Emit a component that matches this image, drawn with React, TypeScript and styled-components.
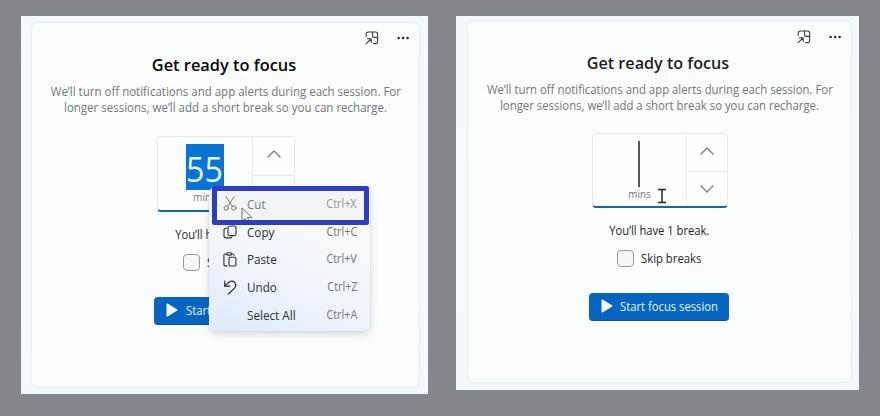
import React from "react";
import styled, { createGlobalStyle } from "styled-components";

const GlobalStyle = createGlobalStyle`
  *, *::before, *::after { box-sizing: border-box; }
  body { margin: 0; background: #85868b; overflow: hidden; }
  svg { display: block; flex: none; }
`;

const Page = styled.main`
  display: flex;
  align-items: flex-start;
  gap: 28px;
  width: 880px;
  height: 416px;
  padding: 16px 21px;
  background: #85868b;
  font-family: "Open Sans", "Noto Sans", sans-serif;
  color: #252627;
`;

const Panel = styled.section<{ $compact?: boolean }>`
  position: relative;
  display: flex;
  flex: none;
  width: ${(p) => (p.$compact ? 403 : 407)}px;
  height: ${(p) => (p.$compact ? 374 : 378)}px;
  padding: ${(p) => (p.$compact ? "4px 7px 7px 11px" : "6px 8px 6px 10px")};
  background: linear-gradient(180deg, #f2fafb, #f3fcfb 60%, #f2f9fb);
`;

const Card = styled.div`
  display: flex;
  flex: 1;
  min-width: 0;
  flex-direction: column;
  align-items: center;
  border: 1px solid #e9eeef;
  border-radius: 7px;
  background: #fcfefd;
  box-shadow: 0 0 1px #e6ebec;
`;

const Toolbar = styled.div<{ $compact?: boolean }>`
  display: flex;
  align-self: stretch;
  align-items: center;
  justify-content: flex-end;
  gap: 18px;
  height: 30px;
  padding: ${(p) => (p.$compact ? "2px 9px 0 0" : "0 9px 0 0")};
`;

const Fit = styled.span<{ $x: number; $from?: string }>`
  display: inline-block;
  white-space: nowrap;
  transform: scaleX(${(p) => p.$x});
  transform-origin: ${(p) => p.$from ?? "center"};
`;

const Title = styled.h1<{ $compact?: boolean }>`
  margin: 0;
  padding-right: 3px;
  font-size: 17px;
  font-weight: 600;
  line-height: 23px;
  color: ${(p) => (p.$compact ? "#1d1e1f" : "#050506")};
`;

const Description = styled.p`
  display: flex;
  flex-direction: column;
  align-items: center;
  margin: 7px 0 0;
  font-size: 13px;
  line-height: 16px;
  color: #737576;
`;

const NumberBox = styled.div<{ $compact?: boolean }>`
  display: flex;
  flex: none;
  width: ${(p) => (p.$compact ? 136 : 138)}px;
  height: ${(p) => (p.$compact ? 75 : 76)}px;
  margin-top: ${(p) => (p.$compact ? 20 : 21)}px;
  border: 1px solid #e8eaea;
  border-bottom: 2px solid #0f66b5;
  border-radius: 4px;
  background: #fdfefe;
`;

const Value = styled.div`
  display: flex;
  flex: 1;
  flex-direction: column;
  align-items: center;
  padding-top: 7px;
`;

const Selected = styled.div`
  display: flex;
  justify-content: center;
  width: 38px;
  height: 46px;
  background: #0a74d6;
  color: #eaf8fc;
  font-size: 34px;
  line-height: 50px;
`;

const Caret = styled.div`
  width: 2px;
  height: 46px;
  background: #565757;
`;

const Unit = styled.div`
  height: 14px;
  font-size: 11px;
  line-height: 14px;
  color: #757677;
`;

const Stepper = styled.div<{ $compact?: boolean }>`
  display: flex;
  flex-direction: column;
  width: ${(p) => (p.$compact ? 41 : 42)}px;
  border-left: 1px solid #e8eaea;
`;

const Step = styled.button`
  display: flex;
  flex: 1;
  align-items: center;
  justify-content: center;
  padding: 0 0 3px 1px;
  border: 0;
  background: transparent;
  color: #77797a;

  & + & { padding: 0 0 0 1px; border-top: 1px solid #e8eaea; }
`;

const Breaks = styled.div`
  height: 18px;
  margin-top: 13px;
  font-size: 13px;
  line-height: 18px;
`;

const SkipRow = styled.label`
  display: flex;
  align-items: center;
  gap: 7px;
  width: 85px;
  height: 17px;
  margin-top: 11px;
  font-size: 13px;
  line-height: 17px;
`;

const Checkbox = styled.span`
  flex: none;
  width: 17px;
  height: 17px;
  border: 1px solid #959798;
  border-radius: 4px;
  background: #f6f8f8;
`;

const StartButton = styled.button<{ $compact?: boolean }>`
  display: flex;
  flex: none;
  align-items: center;
  gap: ${(p) => (p.$compact ? 7 : 8)}px;
  width: ${(p) => (p.$compact ? 140 : 142)}px;
  height: 28px;
  margin: 26px 1px 0 0;
  padding: 0 0 1px 12px;
  border: 0;
  border-bottom: 1px solid #0a559e;
  border-radius: 4px;
  background: #0565c1;
  color: #eaf4fc;
  font: 13px/18px "Open Sans", "Noto Sans", sans-serif;
`;

const Menu = styled.div`
  position: absolute;
  left: 188px;
  top: 171px;
  width: 161px;
  height: 144px;
  padding: 3px 0;
  border-radius: 6px;
  background: linear-gradient(22deg, #dfebf9 0%, #eff4fb 36%, #f7f9fb 65%, #f8f9fa 100%);
  box-shadow: 0 3px 8px rgba(40, 50, 65, 0.18), 0 0 2px rgba(40, 50, 65, 0.12);
`;

const MenuItem = styled.div<{ $muted?: boolean }>`
  display: grid;
  grid-template-columns: 14px 1fr auto;
  align-items: center;
  column-gap: 10px;
  height: 27.75px;
  padding: 0 13px 0 14px;
  font-size: 13px;
  line-height: 18px;
  color: ${(p) => (p.$muted ? "#77797c" : "#2c2e31")};
  background: ${(p) => (p.$muted ? "#f2f4f6" : "transparent")};
`;

const Shortcut = styled.span<{ $muted?: boolean }>`
  font-size: 12px;
  color: ${(p) => (p.$muted ? "#94969a" : "#717478")};
`;

const Highlight = styled.div`
  position: absolute;
  left: 191px;
  top: 170px;
  width: 157px;
  height: 39px;
  border: 5px solid #2f3bcb;
  border-radius: 2px;
`;

const Pointer = styled.div`
  position: absolute;
  left: 220px;
  top: 191px;
`;

const TextPointer = styled.div`
  position: absolute;
  left: 201px;
  top: 172px;
`;

const line = { fill: "none", stroke: "currentColor", strokeLinecap: "round", strokeLinejoin: "round" } as const;

const PopIcon = () => (
  <svg width="14" height="14" viewBox="0 0 14 14" {...line} stroke="#3c3d3e" strokeWidth="1.1">
    <path d="M1.2 5.5V3.2a2.2 2.2 0 0 1 2.2-2.2h7a2.2 2.2 0 0 1 2.2 2.2v7.2a2.2 2.2 0 0 1-2.2 2.2H8.6" />
    <path d="M7.6 1v4.2a1.2 1.2 0 0 0 1.2 1.2h3.8" />
    <path d="M1.2 12.7 6 8M2.4 7.8h3.8v3.8" />
  </svg>
);

const MoreIcon = () => (
  <svg width="13" height="4" viewBox="0 0 13 4" fill="#252627">
    <circle cx="1.6" cy="2" r="1.25" />
    <circle cx="6.1" cy="2" r="1.25" />
    <circle cx="10.6" cy="2" r="1.25" />
  </svg>
);

const Chevron = ({ down }: { down?: boolean }) => (
  <svg width="14" height="8" viewBox="0 0 14 8" {...line} strokeWidth="1.3">
    <path d={down ? "M1 1l6 6 6-6" : "M1 7l6-6 6 6"} />
  </svg>
);

const PlayIcon = () => (
  <svg width="12" height="14" viewBox="0 0 12 14" fill="#f6fcff">
    <path d="M.5 1.6C.5.7 1.3.3 2 .8l8.9 5.4c.7.4.7 1.2 0 1.6L2 13.2c-.7.5-1.5.1-1.5-.8z" />
  </svg>
);

const CutIcon = () => (
  <svg width="14" height="15" viewBox="0 0 14 15" {...line}>
    <path d="M3 .8l6.3 9.5M11 .8L4.7 10.3" />
    <circle cx="3.2" cy="12" r="2.2" />
    <circle cx="10.8" cy="12" r="2.2" />
  </svg>
);

const CopyIcon = () => (
  <svg width="14" height="14" viewBox="0 0 14 14" {...line} strokeWidth="1.1">
    <rect x="5" y="1" width="8" height="9.6" rx="1.8" />
    <path d="M3.6 3.2H2.8A1.8 1.8 0 0 0 1 5v6a1.9 1.9 0 0 0 1.9 1.9h4.3a1.8 1.8 0 0 0 1.7-1" />
  </svg>
);

const PasteIcon = () => (
  <svg width="14" height="15" viewBox="0 0 14 15" {...line} strokeWidth="1.1">
    <path d="M4 13.9H2.3A1.4 1.4 0 0 1 .9 12.5V3.4A1.4 1.4 0 0 1 2.3 2h1.5M8.6 2h1.2a1.3 1.3 0 0 1 1.3 1.3" />
    <rect x="3.8" y=".8" width="4.8" height="2.3" rx="1" />
    <rect x="6" y="5.2" width="6.9" height="8.8" rx="1.3" />
  </svg>
);

const UndoIcon = () => (
  <svg width="14" height="15" viewBox="0 0 14 15" {...line} strokeWidth="1.2">
    <path d="M1.7 1v5.1h5.2" />
    <path d="M1.9 5.9l3.5-3.2c1.9-1.7 4.5-1.9 6.1-.4 1.7 1.6 1.7 4.1 0 5.8L5.3 14" />
  </svg>
);

const menuItems = [
  { label: "Cut", keys: "Ctrl+X", icon: <CutIcon />, muted: true },
  { label: "Copy", keys: "Ctrl+C", icon: <CopyIcon /> },
  { label: "Paste", keys: "Ctrl+V", icon: <PasteIcon /> },
  { label: "Undo", keys: "Ctrl+Z", icon: <UndoIcon /> },
  { label: "Select All", keys: "Ctrl+A", icon: <span /> },
];

const FocusCard = ({ compact, value }: { compact?: boolean; value?: string }) => (
  <Card>
    <Toolbar $compact={compact}>
      <PopIcon />
      <MoreIcon />
    </Toolbar>
    <Title $compact={compact}>
      <Fit $x={compact ? 0.95 : 0.963}>Get ready to focus</Fit>
    </Title>
    <Description>
      <Fit $x={compact ? 0.874 : 0.885}>We’ll turn off notifications and app alerts during each session. For</Fit>
      <Fit $x={compact ? 0.874 : 0.885}>longer sessions, we’ll add a short break so you can recharge.</Fit>
    </Description>
    <NumberBox $compact={compact}>
      <Value>
        {value ? (
          <Selected>
            <Fit $x={0.95}>{value}</Fit>
          </Selected>
        ) : (
          <Caret />
        )}
        <Unit>
          <Fit $x={0.9}>mins</Fit>
        </Unit>
      </Value>
      <Stepper $compact={compact}>
        <Step aria-label="Increase"><Chevron /></Step>
        <Step aria-label="Decrease"><Chevron down /></Step>
      </Stepper>
    </NumberBox>
    <Breaks>
      <Fit $x={0.86}>You’ll have 1 break.</Fit>
    </Breaks>
    <SkipRow>
      <Checkbox />
      <Fit $x={0.87} $from="left">Skip breaks</Fit>
    </SkipRow>
    <StartButton $compact={compact}>
      <PlayIcon />
      <Fit $x={0.865} $from="left">Start focus session</Fit>
    </StartButton>
  </Card>
);

export default function App() {
  return (
    <>
      <GlobalStyle />
      <Page>
        <Panel>
          <FocusCard value="55" />
          <Menu>
            {menuItems.map((item) => (
              <MenuItem key={item.label} $muted={item.muted}>
                {item.icon}
                <Fit $x={0.9} $from="left">{item.label}</Fit>
                <Shortcut $muted={item.muted}>
                  <Fit $x={0.9} $from="right">{item.keys}</Fit>
                </Shortcut>
              </MenuItem>
            ))}
          </Menu>
          <Pointer>
            <svg width="13" height="17" viewBox="0 0 13 17" fill="#fff" stroke="#6b6d70" strokeLinejoin="round">
              <path d="M1 1v13.2l3.2-2.8 2 4.6 2.2-1-2-4.4h4.6z" />
            </svg>
          </Pointer>
          <Highlight />
        </Panel>
        <Panel $compact>
          <FocusCard compact />
          <TextPointer>
            <svg width="10" height="16" viewBox="0 0 10 16" fill="none" stroke="#222" strokeWidth="1.5">
              <path d="M1 1.5h3.2l.8.6.8-.6H9M1 14.5h3.2l.8-.6.8.6H9M5 2v12" />
            </svg>
          </TextPointer>
        </Panel>
      </Page>
    </>
  );
}
